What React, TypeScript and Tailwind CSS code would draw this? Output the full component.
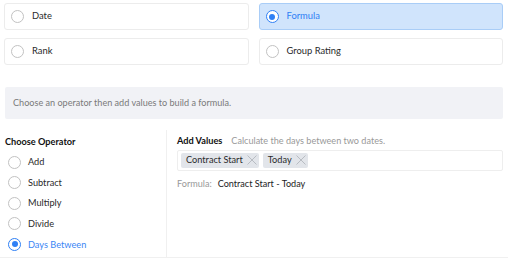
import { useState } from 'react'

const TYPES = ['Date', 'Formula', 'Rank', 'Group Rating']
const OPERATORS = ['Add', 'Subtract', 'Multiply', 'Divide', 'Days Between']

function Radio({ checked }: { checked: boolean }) {
  return checked ? (
    <span className="flex h-[13px] w-[13px] shrink-0 items-center justify-center rounded-full border-[1.5px] border-[#2f80f5] bg-white">
      <span className="h-[6px] w-[6px] rounded-full bg-[#2f80f5]" />
    </span>
  ) : (
    <span className="h-[13px] w-[13px] shrink-0 rounded-full border-[1.5px] border-[#c2c2c2] bg-white" />
  )
}

function Chip({ label }: { label: string }) {
  return (
    <span className="flex h-[15px] items-center gap-[4px] rounded-[2px] bg-[#e2e5ea] pl-[5px] pr-[2px] text-[9.2px] text-[#2a2a2a]">
      {label}
      <svg width="10" height="10" viewBox="0 0 10 10" stroke="#b8bcc2" strokeWidth="1" fill="none">
        <path d="M0.5 0.5 L9.5 9.5 M9.5 0.5 L0.5 9.5" />
      </svg>
    </span>
  )
}

export default function App() {
  const [type, setType] = useState('Formula')
  const [op, setOp] = useState('Days Between')

  return (
    <div className="h-[262px] w-[508px] overflow-hidden bg-white font-['Lato',sans-serif] text-[#222]">
      <div className="grid grid-cols-2 gap-x-[10px] gap-y-[8px] pl-[4px] pr-[5px] pt-[3px]">
        {TYPES.map((t) => {
          const sel = t === type
          return (
            <button
              key={t}
              onClick={() => setType(t)}
              className={`flex h-[27px] items-center gap-[8px] rounded-[3px] border pl-[6px] text-left text-[9.4px] ${
                sel ? 'border-[#a9cdf7] bg-[#d0e4fc] text-[#2f80f5]' : 'border-[#ececec] bg-white text-[#2a2a2a]'
              }`}
            >
              <Radio checked={sel} />
              {t}
            </button>
          )
        })}
      </div>

      <div className="mx-[5px] mt-[22px] flex h-[32px] items-center rounded-[2px] bg-[#f1f2f6] pl-[8px] text-[9.1px] text-[#7a7a7a]">
        Choose an operator then add values to build a formula.
      </div>

      <div className="mt-[11px] flex h-[128px] border-b border-[#f0f0f0]">
        <div className="w-[167px] border-r border-[#f0f0f0] pl-[5px] pt-[5px]">
          <div className="text-[9.2px] font-bold text-[#111]">Choose Operator</div>
          <div className="mt-[3px] flex flex-col">
            {OPERATORS.map((o) => {
              const sel = o === op
              return (
                <button
                  key={o}
                  onClick={() => setOp(o)}
                  className={`flex h-[20.6px] items-center gap-[7px] pl-[3px] text-left text-[9.2px] ${
                    sel ? 'text-[#3a86f5]' : 'text-[#2a2a2a]'
                  }`}
                >
                  <Radio checked={sel} />
                  {o}
                </button>
              )
            })}
          </div>
        </div>

        <div className="flex-1 pl-[10px] pr-[5px] pt-[4px]">
          <div className="flex items-baseline gap-[9px]">
            <span className="text-[9.2px] font-bold text-[#111]">Add Values</span>
            <span className="text-[9.1px] text-[#999]">Calculate the days between two dates.</span>
          </div>
          <div className="mt-[2px] flex h-[21px] items-center gap-[4px] rounded-[2px] border border-[#eeeeee] pl-[3px]">
            <Chip label="Contract Start" />
            <Chip label="Today" />
          </div>
          <div className="mt-[6px] flex gap-[6px] text-[9.1px]">
            <span className="text-[#999]">Formula:</span>
            <span className="text-[#222]">Contract Start - Today</span>
          </div>
        </div>
      </div>
    </div>
  )
}
